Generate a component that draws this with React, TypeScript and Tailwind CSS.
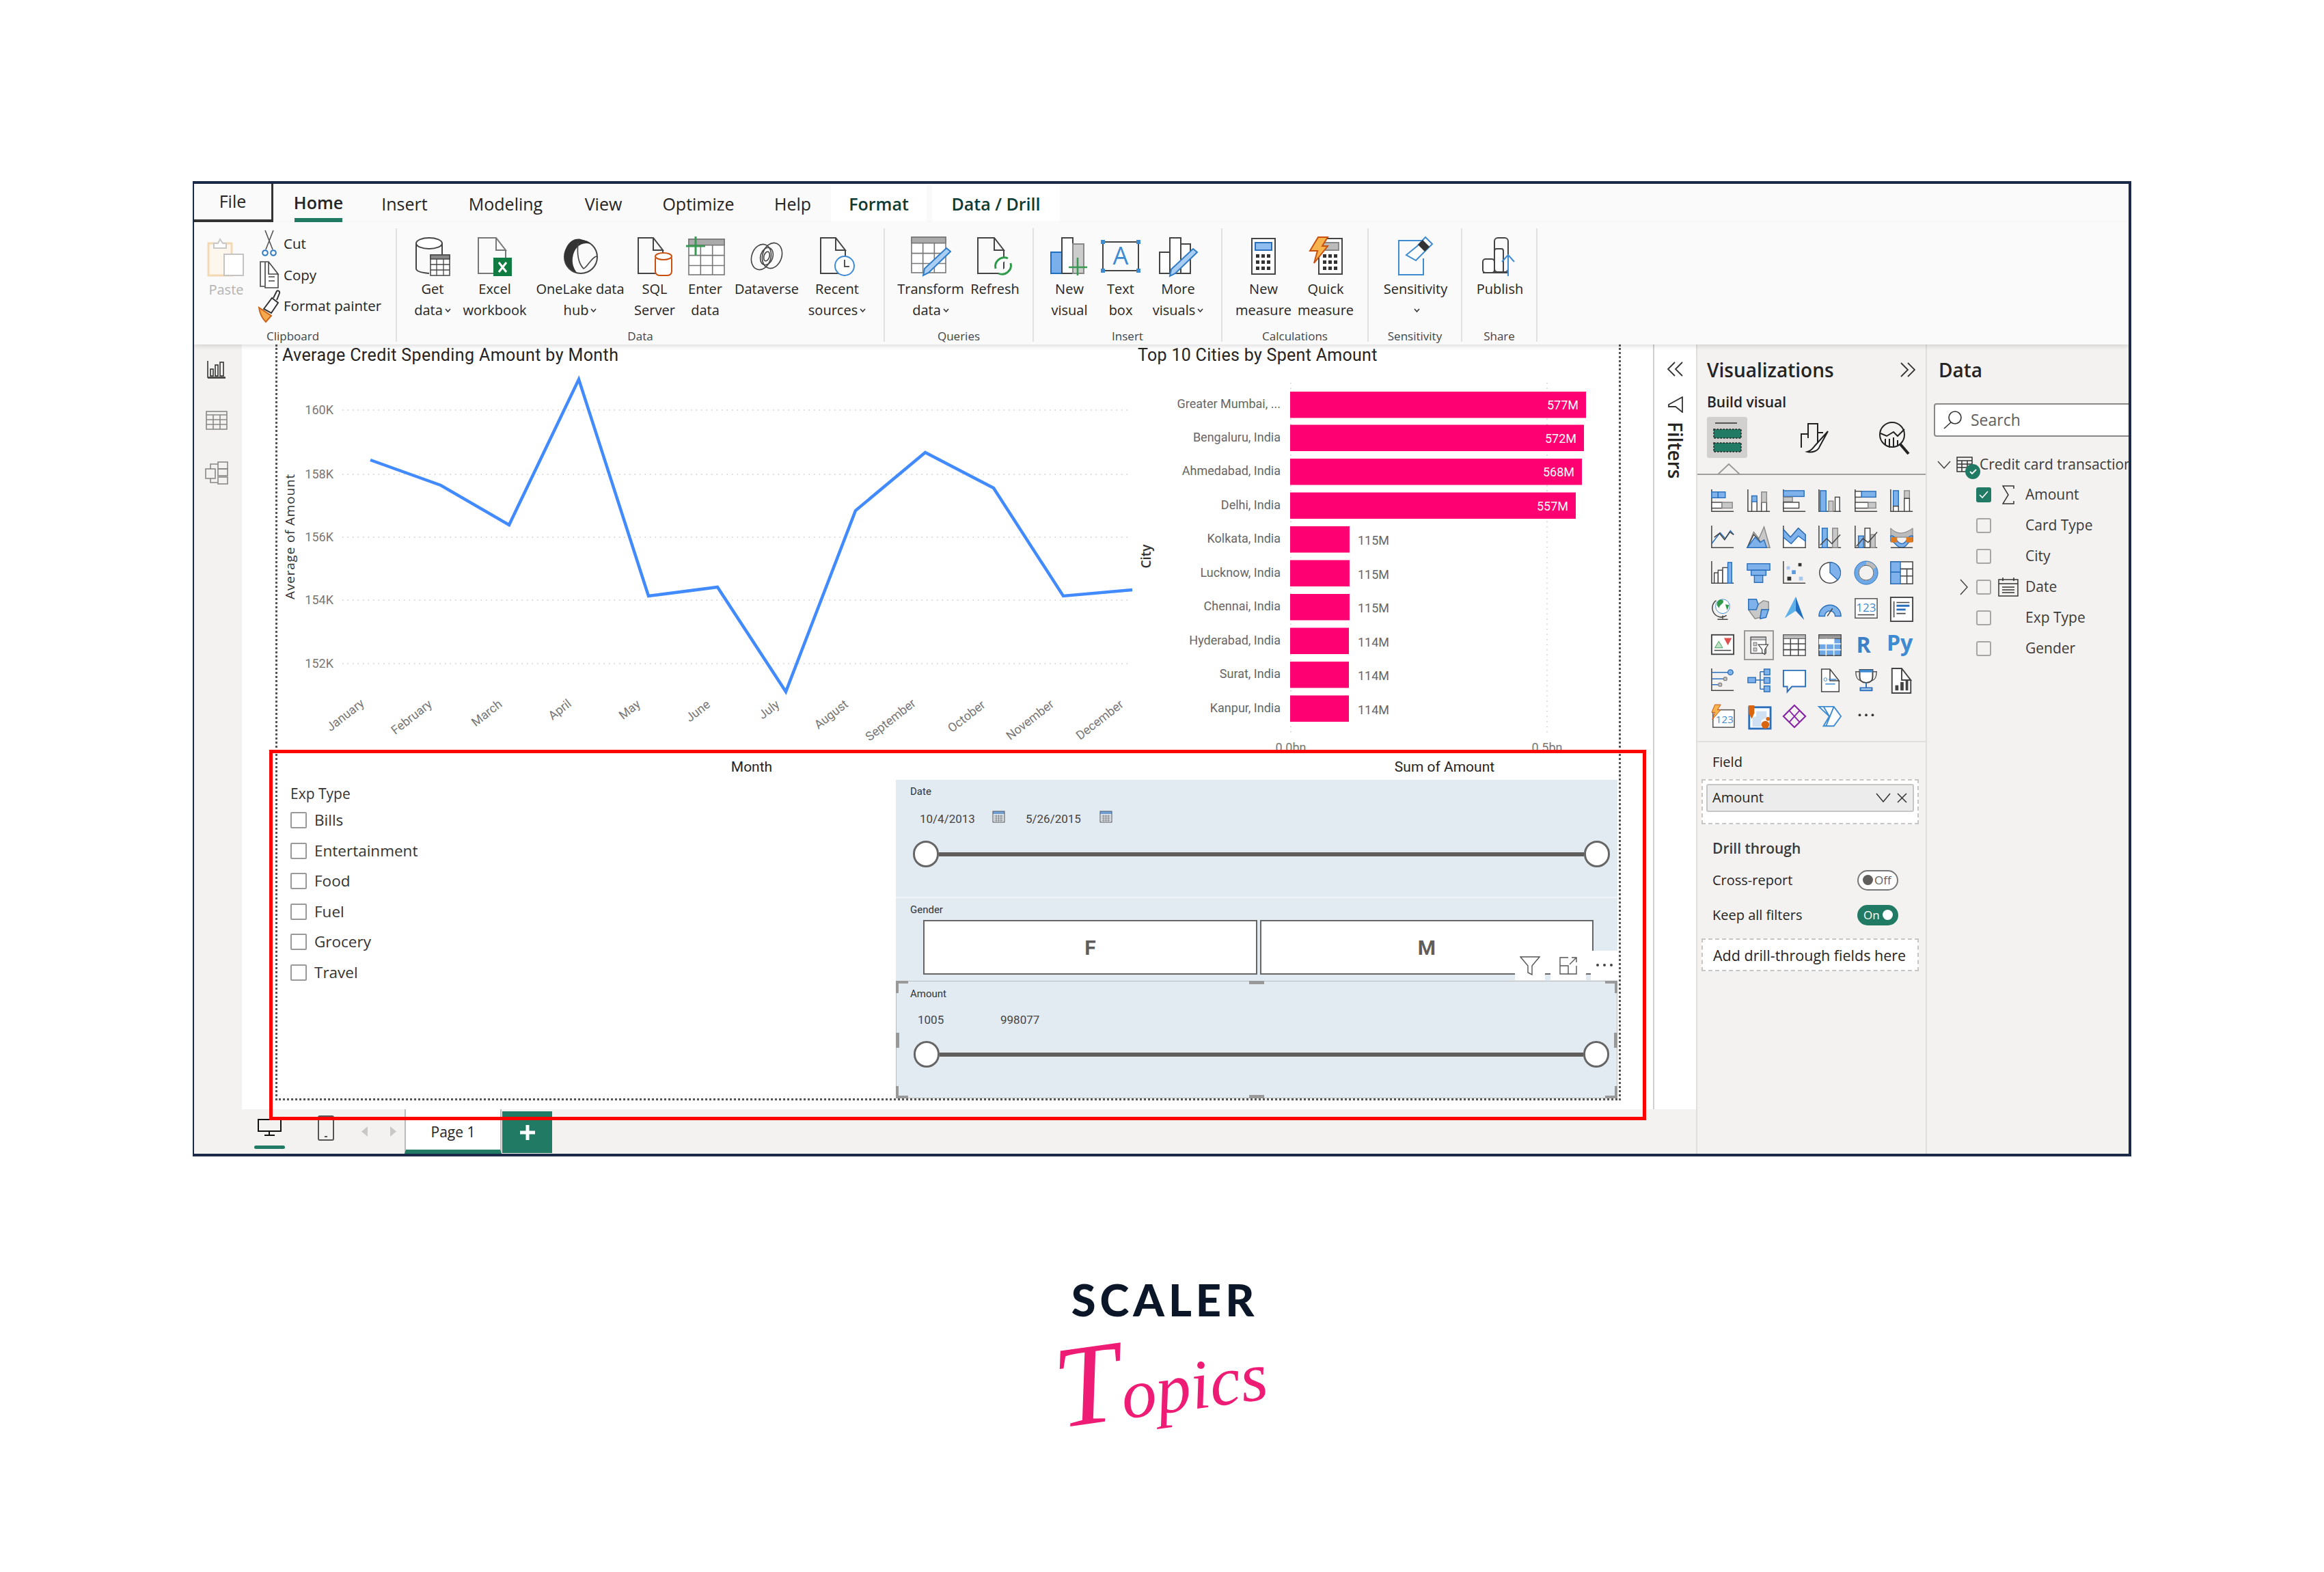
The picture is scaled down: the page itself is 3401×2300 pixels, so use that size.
import React from "react";

const D = "#444";
const Svg = ({ w, h, children }: { w: number; h: number; children: React.ReactNode }) => (
  <svg width={w} height={h} viewBox={`0 0 ${w} ${h}`} fill="none" stroke={D} strokeWidth="2" className="overflow-visible shrink-0">{children}</svg>
);
const docPath = (x: number, y: number, w: number, h: number) => `M${x + w} ${y + 18}V${y + h}H${x}V${y}H${x + w - 14}L${x + w} ${y + 18}H${x + w - 14}V${y}`;
const Calc = ({ x, y, blue }: { x: number; y: number; blue?: boolean }) => (
  <g>
    <rect x={x} y={y} width="34" height="52" fill="#fff" />
    <rect x={x + 5} y={y + 6} width="24" height="11" fill={blue ? "#8fbdf0" : "#bbb"} stroke={blue ? "#2a6fbb" : "#888"} />
    {[23, 32, 41].map((dy) => [6, 14, 22].map((dx) => <rect key={dy * 100 + dx} x={x + dx} y={y + dy} width="5" height="5" fill="#333" stroke="none" />))}
  </g>
);
const TableI = ({ x, y, w, h }: { x: number; y: number; w: number; h: number }) => (
  <g stroke="#777" strokeWidth="1.6">
    <rect x={x} y={y} width={w} height={h} fill="#fff" />
    <rect x={x} y={y} width={w} height={h / 6} fill="#aaa" />
    <path d={`M${x + w / 3} ${y + h / 6}V${y + h}M${x + (2 * w) / 3} ${y + h / 6}V${y + h}M${x} ${y + h / 2.2}H${x + w}M${x} ${y + h / 1.35}H${x + w}`} />
  </g>
);
const Pencil = ({ x, y }: { x: number; y: number }) => (
  <path d={`M${x + 34} ${y}l6 5L${x + 8} ${y + 36}L${x} ${y + 40}L${x + 2} ${y + 30}Z`} fill="#a9cdf3" stroke="#2f7cc7" />
);

const Paste = () => (<Svg w={56} h={58}><rect x="2" y="9" width="34" height="47" stroke="#f3d8b4" strokeWidth="3" fill="#fdf6ec" /><path d="M10 16V9h6l3-6 4 6h5v7z" stroke="#c8c8c8" fill="#fff" /><rect x="25" y="25" width="28" height="31" stroke="#c4c4c4" fill="#fff" /></Svg>);
const Cut = () => (<Svg w={20} h={40}><path d="M4 0l11 28M16 0L5 28" strokeWidth="1.6" stroke="#555" /><circle cx="4" cy="33" r="3.8" stroke="#2b78c5" /><circle cx="16" cy="33" r="3.8" stroke="#2b78c5" /></Svg>);
const Copy = () => (<Svg w={30} h={42}><path d="M8 2H2v36h6" strokeWidth="1.6" /><path d={docPath(9, 2, 19, 38)} strokeWidth="1.6" fill="#fff" /><path d="M14 24h9M14 30h9" strokeWidth="1.4" /></Svg>);
const Painter = () => (<Svg w={32} h={48}><path d="M1 26l18 12-8 9C6 42 2 34 1 26z" fill="#f5a94c" stroke="#c8651b" /><path d="M8 28L20 12l9 7-10 15z" fill="#fff" stroke="#333" /><path d="M22 12l5-10c1-2 5 0 4 3l-4 10" fill="#fff" stroke="#333" /></Svg>);
const GetData = () => (<Svg w={51} h={57}><path d="M1 9v37c0 4 8 6 19 7M39 9v16" /><ellipse cx="20" cy="9" rx="19" ry="8" fill="#fff" /><rect x="22" y="26" width="28" height="30" fill="#fff" strokeWidth="1.5" /><rect x="22" y="26" width="28" height="6" fill="#888" strokeWidth="1.5" /><path d="M31 32v24M41 32v24M22 40h28M22 48h28" strokeWidth="1.3" /></Svg>);
const Excel = () => (<Svg w={51} h={57}><path d={docPath(1, 1, 40, 52)} stroke="#777" /><rect x="23" y="30" width="27" height="27" fill="#107c41" stroke="none" /><path d="M31 37l11 14M42 37L31 51" stroke="#fff" strokeWidth="3" /></Svg>);
const OneLake = () => (<Svg w={51} h={56}><circle cx="26" cy="29" r="24" /><path d="M2 28C2 14 12 0 26 3c10 2 14 7 14 7C26 6 16 16 14 30c-1 8 1 15 6 22C9 48 2 40 2 28z" fill="#333" stroke="none" /><path d="M22 8c-2 18 0 30 8 38 6-2 12-18 20-18" strokeWidth="1.6" /></Svg>);
const Sql = () => (<Svg w={50} h={57}><path d={docPath(1, 1, 36, 52)} /><g stroke="#ca5010"><rect x="26" y="26" width="24" height="30" rx="6" fill="#fff" /><ellipse cx="38" cy="28" rx="12" ry="5" fill="#fff" /></g></Svg>);
const Enter = () => (<Svg w={56} h={58}><TableI x={4} y={4} w={52} h={52} /><path d="M14 0v28M0 14h28" stroke="#3a9a54" strokeWidth="3" /></Svg>);
const Dataverse = () => (<Svg w={51} h={42}><ellipse cx="17" cy="22" rx="14" ry="19" transform="rotate(18 17 22)" strokeWidth="1.6" /><ellipse cx="33" cy="20" rx="14" ry="19" transform="rotate(18 33 20)" strokeWidth="1.6" /><ellipse cx="25" cy="21" rx="9" ry="13" transform="rotate(18 25 21)" strokeWidth="1.6" /><ellipse cx="25" cy="21" rx="4" ry="7" transform="rotate(18 25 21)" strokeWidth="1.6" /></Svg>);
const Recent = () => (<Svg w={51} h={57}><path d={docPath(1, 1, 36, 52)} /><circle cx="36" cy="42" r="14" fill="#fff" stroke="#3f8bd2" /><path d="M36 33v10h7" stroke="#555" /></Svg>);
const Transform = () => (<Svg w={58} h={58}><TableI x={1} y={1} w={50} h={52} /><Pencil x={18} y={17} /></Svg>);
const Refresh = () => (<Svg w={52} h={57}><path d={docPath(1, 1, 38, 52)} /><path d="M27 46a13 13 0 0 1 18-15M49 38a13 13 0 0 1-18 15" stroke="#2e9a4a" strokeWidth="3" fill="#fff" /></Svg>);
const NewVisual = () => (<Svg w={56} h={57}><rect x="1" y="22" width="16" height="31" fill="#79b0ec" stroke="#1f6ec0" /><rect x="17" y="1" width="16" height="52" fill="#fff" /><rect x="33" y="10" width="16" height="43" fill="#ccc" stroke="#888" /><path d="M40 30v26M27 44h27" stroke="#3a9a54" strokeWidth="2.6" /></Svg>);
const TextBox = () => (<Svg w={58} h={48}><rect x="3" y="3" width="52" height="42" /><rect x="0" y="0" width="6" height="6" fill="#3f8bd2" stroke="none" /><rect x="52" y="0" width="6" height="6" fill="#3f8bd2" stroke="none" /><rect x="0" y="42" width="6" height="6" fill="#3f8bd2" stroke="none" /><rect x="52" y="42" width="6" height="6" fill="#3f8bd2" stroke="none" /><text x="29" y="36" textAnchor="middle" fontSize="36" fill="#3f8bd2" stroke="none" fontFamily="Open Sans">A</text></Svg>);
const MoreVis = () => (<Svg w={56} h={57}><rect x="1" y="22" width="15" height="31" fill="#fff" /><rect x="16" y="1" width="16" height="52" fill="#fff" /><rect x="32" y="10" width="14" height="43" fill="#fff" /><Pencil x={16} y={17} /></Svg>);
const NewMeasure = () => (<Svg w={36} h={54}><Calc x={1} y={1} blue /></Svg>);
const Quick = () => (<Svg w={50} h={56}><Calc x={15} y={2} /><path d="M14 0h14l-8 13h8L8 38l5-18H2z" fill="#f7b44e" stroke="#ca5010" /></Svg>);
const Sensitivity = () => (<Svg w={52} h={58}><path d="M36 6H1v50h36V32" stroke="#3f8bd2" /><path d="M28 14L40 1l10 10-24 24-14-8z" fill="#fff" stroke="#3f8bd2" /><path d="M36 5l10 10-7 7-10-10z" fill="#333" stroke="none" /></Svg>);
const Publish = () => (<Svg w={52} h={57}><rect x="1" y="32" width="17" height="20" rx="4" fill="#fff" /><rect x="18" y="17" width="13" height="35" rx="3" fill="#fff" /><rect x="18" y="1" width="20" height="50" rx="5" /><path d="M1 52h36" /><path d="M38 57V27M29 36l9-10 9 10" stroke="#3f8bd2" /></Svg>);

const chev = <span className="inline-block ml-[3px] text-[11px] align-middle">
  <svg width="9" height="6" viewBox="0 0 9 6" fill="none" stroke="#333" strokeWidth="1.6"><path d="M1 1l3.5 4L8 1" /></svg>
</span>;

function Item({ w, icon, a, b, c }: { w: string; icon: React.ReactNode; a: string; b?: string; c?: boolean }) {
  return (
    <div className={`${w} flex flex-col items-center shrink-0`}>
      <div className="h-[60px] flex items-center justify-center">{icon}</div>
      <div className="mt-[2px] text-[20px] leading-[31px] whitespace-nowrap text-[#252423]">{a}</div>
      <div className="text-[20px] leading-[31px] h-[31px] whitespace-nowrap text-[#252423] flex items-center">{b}{c && chev}</div>
    </div>
  );
}
function Group({ w, label, children }: { w: string; label: string; children: React.ReactNode }) {
  return (
    <div className={`${w} h-[166px] mt-[9px] border-r-2 border-[#e4e2e0] flex flex-col shrink-0`}>
      <div className="flex-1 flex pt-[11px]">{children}</div>
      <div className="h-[17px] leading-[17px] text-[17px] text-center text-[#444] whitespace-nowrap">{label}</div>
    </div>
  );
}

const bl = { fill: "#7fb2ea", stroke: "#2a6fbb", strokeWidth: 1.5 };
const gr = { fill: "#c8c8c8", stroke: "#888", strokeWidth: 1.5 };
const wh = { fill: "#fff", stroke: "#444", strokeWidth: 1.5 };
const Ax = () => <path d="M1 0V34H35" stroke="#444" strokeWidth="1.6" fill="none" />;
const VL = ({ d, c = "#444" }: { d: string; c?: string }) => <path d={d} stroke={c} strokeWidth="1.6" fill="none" />;
const blueD = "#2a6fbb";
const viz: React.ReactNode[] = [
  <><Ax /><rect x="1" y="4" width="10" height="9" {...bl} /><rect x="11" y="4" width="11" height="9" {...bl} /><rect x="1" y="20" width="16" height="9" {...wh} /><rect x="17" y="20" width="16" height="9" {...gr} /></>,
  <><Ax /><rect x="7" y="18" width="8" height="16" {...wh} /><rect x="7" y="10" width="8" height="9" {...bl} /><rect x="22" y="20" width="8" height="14" {...wh} /><rect x="22" y="4" width="8" height="16" {...gr} /></>,
  <><Ax /><rect x="1" y="2" width="32" height="9" {...bl} /><rect x="1" y="12" width="14" height="7" {...gr} /><rect x="1" y="20" width="24" height="9" {...wh} /></>,
  <><Ax /><rect x="3" y="2" width="9" height="32" {...bl} /><rect x="16" y="18" width="7" height="16" {...gr} /><rect x="26" y="12" width="7" height="22" {...wh} /></>,
  <><Ax /><rect x="1" y="3" width="10" height="9" {...wh} /><rect x="11" y="3" width="22" height="9" {...bl} /><rect x="1" y="20" width="20" height="9" {...wh} /><rect x="21" y="20" width="12" height="9" {...gr} /></>,
  <><Ax /><rect x="5" y="2" width="8" height="24" {...bl} /><rect x="5" y="26" width="8" height="8" {...wh} /><rect x="22" y="2" width="8" height="12" {...gr} /><rect x="22" y="14" width="8" height="20" {...wh} /></>,
  <><Ax /><VL d="M1 28L14 11l8 9 8-12 5 6" c="#2a6fbb" /><VL d="M5 18l8-6 8 10 8-12 6 4" /></>,
  <><path d="M0 34L10 10l8 10 8-18 9 32z" {...gr} /><path d="M0 34L10 14l8 8 7 12z" {...wh} /><path d="M0 34L12 18l8 8 6-4 4 12z" {...bl} /></>,
  <><Ax /><path d="M1 6L12 18 24 4 35 14V34H1z" {...wh} /><path d="M1 6L12 18 24 4 35 14V24L24 16 13 28 1 18z" {...bl} /></>,
  <><Ax /><rect x="6" y="4" width="8" height="30" {...bl} /><rect x="22" y="4" width="8" height="30" {...gr} /><VL d="M3 30l10-10 8 8 13-14" /></>,
  <><Ax /><rect x="6" y="16" width="8" height="18" {...bl} /><rect x="16" y="4" width="8" height="30" {...wh} /><rect x="25" y="14" width="7" height="20" {...gr} /><VL d="M3 32l10-12 8 6 14-16" /></>,
  <><path d="M1 4c10 10 20 10 34 0v14H1z" fill="#bbb" stroke="#777" /><path d="M1 16c8-2 8 12 17 12S26 14 35 16v8c-8-2-8 10-17 10S8 24 1 24z" {...bl} /><rect x="1" y="18" width="10" height="8" fill="#e07a1f" /><rect x="25" y="18" width="10" height="8" fill="#e07a1f" /><VL d="M1 34H35" /></>,
  <><Ax /><rect x="5" y="18" width="6" height="16" {...wh} /><rect x="11" y="14" width="7" height="20" {...wh} /><rect x="18" y="10" width="8" height="24" {...wh} /><rect x="26" y="2" width="6" height="32" {...bl} /></>,
  <><rect x="0" y="4" width="35" height="10" {...bl} /><rect x="6" y="14" width="23" height="8" {...bl} /><rect x="11" y="22" width="13" height="11" {...bl} /></>,
  <><Ax /><rect x="6" y="8" width="5" height="5" fill="#a8c8ef" /><rect x="14" y="14" width="6" height="6" fill="#5a9be0" /><rect x="24" y="3" width="5" height="5" fill="#333" /><rect x="7" y="24" width="6" height="6" fill="#333" /><rect x="25" y="24" width="6" height="6" fill="#a8c8ef" /></>,
  <><circle cx="18" cy="18" r="16" fill="#fff" stroke="#444" strokeWidth="1.6" /><path d="M18 18V2a16 16 0 0 1 12 27z" {...bl} /></>,
  <><circle cx="18" cy="18" r="15" fill="none" stroke="#6fa8e6" strokeWidth="6" /><path d="M18 3a15 15 0 0 1 13 8" stroke="#bbb" strokeWidth="6" fill="none" /><circle cx="18" cy="18" r="18" fill="none" stroke={blueD} strokeWidth="1" /><circle cx="18" cy="18" r="11.5" fill="none" stroke="#555" strokeWidth="1" /></>,
  <><rect x="1" y="1" width="34" height="34" fill="#fff" stroke="#444" strokeWidth="1.6" /><rect x="1" y="1" width="15" height="16" {...bl} /><rect x="1" y="17" width="15" height="18" {...bl} /><VL d="M16 12H35M26 12V35M16 23H35" /></>,
  <><circle cx="18" cy="15" r="11" fill="#fff" stroke="#3f8bd2" /><path d="M13 5c6-2 8 3 4 6s-6 6-2 9-6-4-6-8 2-6 4-7zM22 12l6 1-3 8z" fill="#2e9a4a" /><VL d="M8 6a14 14 0 0 0 16 23M18 29v5M10 35H26" /></>,
  <><path d="M2 4h12l3 8 8-6 8 2v12H22l-2 12-8 2-6-8-4-6z" {...gr} /><path d="M2 4h12l3 8-3 8H2zM22 20H33l-4 12-9 2z" {...bl} /></>,
  <><path d="M20 0L33 36 20 22z" fill="#1f6ec0" /><path d="M20 0L3 33 20 22z" fill="#5db0e8" /></>,
  <><path d="M1 30a17 17 0 0 1 34 0H26a8 8 0 0 0-16 0z" {...bl} /><VL d="M14 30l8-12" /></>,
  <><rect x="1" y="3" width="34" height="30" fill="#fff" stroke="#555" strokeWidth="1.6" /><text x="18" y="23" textAnchor="middle" fontSize="18" fill="#3f8bd2" fontFamily="Open Sans">123</text><VL d="M5 28H31" /></>,
  <><rect x="1" y="1" width="34" height="37" fill="#fff" stroke="#444" strokeWidth="2" /><VL d="M6 7V32M10 9H30M10 26H24" /><path d="M10 14H30M10 20H24" stroke="#2a6fbb" strokeWidth="3" fill="none" /></>,
  <><rect x="1" y="3" width="34" height="30" fill="#fff" stroke="#444" strokeWidth="2" /><path d="M6 23l6-10 6 10z" fill="#bfe3c4" stroke="#3a9a54" /><path d="M20 8h12l-6 11z" fill="#e04e4e" /><VL d="M5 27H31" /></>,
  <><rect x="3" y="4" width="28" height="30" fill="#fff" stroke="#444" strokeWidth="1.6" /><rect x="3" y="4" width="28" height="5" fill="#ccc" stroke="#444" /><rect x="8" y="14" width="6" height="6" {...gr} /><rect x="8" y="24" width="6" height="6" {...gr} /><path d="M17 18H35L29 27V36L24 33V27z" {...wh} /></>,
  <><rect x="1" y="3" width="34" height="32" fill="#fff" stroke="#555" strokeWidth="1.6" /><rect x="1" y="3" width="34" height="6" fill="#bbb" stroke="#555" /><VL d="M12 9V35M24 9V35M1 17H35M1 26H35" /></>,
  <><rect x="1" y="3" width="34" height="32" fill="#6fa8e6" stroke="#444" strokeWidth="1.6" /><rect x="1" y="3" width="34" height="6" fill="#999" stroke="#444" /><rect x="1" y="9" width="11" height="8" fill="#fff" /><rect x="12" y="9" width="12" height="8" fill="#fff" /><path d="M12 9V35M24 9V35M1 17H35M1 26H35" stroke="#fff" strokeWidth="1.6" /></>,
  <><text x="14" y="31" textAnchor="middle" fontSize="34" fontWeight="700" fill="#3f7fc6" fontFamily="Open Sans">R</text></>,
  <><text x="15" y="27" textAnchor="middle" fontSize="34" fontWeight="700" fill="#3f8bd2" fontFamily="Open Sans">Py</text></>,
  <><Ax /><VL d="M1 6H26M1 16H20M1 25H12" c="#2a6fbb" /><circle cx="30" cy="6" r="4" {...bl} /><circle cx="22" cy="16" r="2.6" {...gr} /><circle cx="14" cy="25" r="2.6" {...gr} /></>,
  <><rect x="1" y="14" width="12" height="8" {...bl} /><rect x="26" y="1" width="9" height="9" {...bl} /><rect x="26" y="14" width="9" height="9" {...bl} /><rect x="26" y="27" width="9" height="9" {...bl} /><VL d="M13 18H20M20 5V32M20 5H26M20 18H26M20 32H26" c="#2a6fbb" /></>,
  <><path d="M1 3H35V28H14L7 36V28H1z" fill="#fff" stroke="#2a6fbb" strokeWidth="2" /></>,
  <><path d={docPath(5, 1, 27, 35)} stroke="#444" strokeWidth="1.6" fill="#fff" /><circle cx="11" cy="17" r="2.5" stroke="#3f8bd2" fill="none" /><VL d="M16 17H28M11 24H26" c="#3f8bd2" /></>,
  <><path d="M8 5H2c0 10 3 13 8 14M28 5h6c0 10-3 13-8 14" stroke="#555" strokeWidth="1.6" fill="none" /><path d="M8 2H28V13c0 6-4 9-10 9S8 19 8 13z" fill="#fff" stroke="#444" strokeWidth="2" /><path d="M8 2H28V6H8z" fill="#3f8bd2" /><path d="M18 22V30M9 34H27V30H9z" stroke="#2a6fbb" strokeWidth="2" fill="#bcd8f5" /></>,
  <><path d={docPath(3, 0, 29, 38)} fill="#fff" strokeWidth="2" stroke="#444" /><rect x="8" y="26" width="5" height="8" fill="#444" /><rect x="16" y="21" width="5" height="13" fill="#444" /><rect x="24" y="18" width="4" height="16" fill="#444" /></>,
  <><rect x="3" y="8" width="33" height="27" fill="#fff" stroke="#555" strokeWidth="1.6" /><text x="21" y="28" textAnchor="middle" fontSize="16" fill="#3f8bd2" fontFamily="Open Sans">123</text><path d="M6 0H15L10 8h5L2 23l4-11H1z" fill="#f7b44e" stroke="#ca5010" /></>,
  <><rect x="3" y="4" width="33" height="33" fill="#fff" stroke="#2a6fbb" strokeWidth="3" /><path d="M14 10H30V20l-8 4v10H8V20l6-2z" fill="#cfe0f3" /><path d="M2 1h9v12l-4 9-5-9z" fill="#d9650f" /><circle cx="32" cy="22" r="3" fill="#d9650f" /><circle cx="28" cy="31" r="6" fill="#d9650f" /></>,
  <><path d="M18 1L35 18 18 35 1 18z" fill="none" stroke="#8a2aa8" strokeWidth="2" /><path d="M18 1l-8 8 16 18-8 8M18 1l8 8-16 18 8 8M10 9l-9 9 9 9M26 9l9 9-9 9" fill="none" stroke="#8a2aa8" strokeWidth="2" /></>,
  <><path d="M1 3H24L35 18 24 33H8l9-15zM8 3l9 15M24 3L12 33" fill="#fff" stroke="#3f8bd2" strokeWidth="2" /></>,
  <><g fill="#333"><circle cx="8" cy="16" r="2" /><circle cx="18" cy="16" r="2" /><circle cx="28" cy="16" r="2" /></g></>,
];

const cities: [string, number, string, number][] = [
  ["Greater Mumbai, ...", 2321, "577M", 573],
  ["Bengaluru, India", 2318, "572M", 621.5],
  ["Ahmedabad, India", 2315, "568M", 671],
  ["Delhi, India", 2306, "557M", 720.5],
  ["Kolkata, India", 1975, "115M", 770],
  ["Lucknow, India", 1975, "115M", 819.5],
  ["Chennai, India", 1975, "115M", 869],
  ["Hyderabad, India", 1974, "114M", 918.5],
  ["Surat, India", 1974, "114M", 968],
  ["Kanpur, India", 1974, "114M", 1017.5],
];
const months: [string, number, number][] = [
  ["January", 506, 1048], ["February", 603, 1051], ["March", 713, 1045], ["April", 820, 1040], ["May", 922, 1040], ["June", 1022, 1042],
  ["July", 1126, 1040], ["August", 1217, 1047], ["September", 1304, 1055], ["October", 1415, 1050], ["November", 1508, 1055], ["December", 1610, 1055],
];

function LineChart() {
  return (
    <svg width="1254" height="633" viewBox="406 504 1254 633" className="shrink-0 font-['Roboto',sans-serif]">
      <text x="413" y="528" fontSize="25" letterSpacing="0.4" fill="#252423">Average Credit Spending Amount by Month</text>
      {[["160K", 600], ["158K", 694], ["156K", 786], ["154K", 878], ["152K", 971]].map(([t, y]) => (
        <g key={t as string}>
          <text x="488" y={(y as number) + 6} textAnchor="end" fontSize="18" fill="#777">{t}</text>
          <line x1="501" x2="1654" y1={y} y2={y} stroke="#ccc" strokeWidth="1.5" strokeDasharray="1.5 6" />
        </g>
      ))}
      <text transform="translate(431 785) rotate(-90)" textAnchor="middle" fontSize="19" fill="#333" fontFamily="Open Sans" letterSpacing="0.8">Average of Amount</text>
      <polyline points="542,673 645,710 745,768 847,555 949,872 1050,859 1150,1012 1252,747 1354,662 1454,714 1556,872 1657,863" fill="none" stroke="#418aff" strokeWidth="4.5" />
      {months.map(([m, x, y]) => (
        <text key={m} transform={`translate(${x + 3} ${y + 3}) rotate(-38)`} textAnchor="middle" fontSize="18" fill="#777">{m}</text>
      ))}
      <text x="1100" y="1129" textAnchor="middle" fontSize="21" fill="#252423">Month</text>
    </svg>
  );
}
function BarChart() {
  return (
    <svg width="707" height="633" viewBox="1660 504 707 633" className="shrink-0 font-['Roboto',sans-serif]">
      <text x="1665" y="528" fontSize="25" letterSpacing="0.3" fill="#252423">Top 10 Cities by Spent Amount</text>
      <line x1="1889" x2="1889" y1="560" y2="1075" stroke="#ccc" strokeWidth="1.5" strokeDasharray="1.5 6" />
      <line x1="2264" x2="2264" y1="560" y2="1075" stroke="#ccc" strokeWidth="1.5" strokeDasharray="1.5 6" />
      <text transform="translate(1684 814) rotate(-90)" textAnchor="middle" fontSize="19" fontWeight="600" fill="#333" fontFamily="Open Sans">City</text>
      {cities.map(([c, e, v, y]) => (
        <g key={c}>
          <rect x="1888" y={y} width={e - 1888} height="38.5" fill="#ff0073" />
          <text x="1874" y={y + 24} textAnchor="end" fontSize="18" fill="#666">{c}</text>
          {e > 2000 ? <text x={e - 11} y={y + 26} textAnchor="end" fontSize="18" fill="#fff">{v}</text> : <text x="1987" y={y + 27} fontSize="18" fill="#666">{v}</text>}
        </g>
      ))}
      <text x="1889" y="1100" textAnchor="middle" fontSize="18" fill="#777">0.0bn</text>
      <text x="2264" y="1100" textAnchor="middle" fontSize="18" fill="#777">0.5bn</text>
      <text x="2114" y="1129" textAnchor="middle" fontSize="21" fill="#252423">Sum of Amount</text>
    </svg>
  );
}

const Slider = () => (
  <div className="flex items-center pl-[25px] pr-[11px] h-[39px]">
    <div className="w-[38px] h-[39px] rounded-full border-[3px] border-[#666] bg-white shrink-0" />
    <div className="flex-1 h-[6px] bg-[#605e5c]" />
    <div className="w-[38px] h-[39px] rounded-full border-[3px] border-[#666] bg-white shrink-0" />
  </div>
);
const CalIcon = () => (
  <svg width="19" height="19" viewBox="0 0 19 19" fill="none" className="shrink-0 -mt-[10px]">
    <rect x="1" y="2" width="17" height="16" fill="#dfe6ee" stroke="#555" />
    <rect x="1" y="2" width="17" height="4" fill="#2a6fbb" opacity=".6" />
    <path d="M3 9h13M3 12h13M3 15h13M6 7v10M9.500 7v10M13 7v10" stroke="#777" strokeWidth=".8" />
  </svg>
);

const Check = ({ on }: { on?: boolean }) => on ? (
  <div className="w-[22px] h-[22px] rounded-[3px] bg-[#217a64] flex items-center justify-center shrink-0">
    <svg width="14" height="12" viewBox="0 0 14 12" fill="none" stroke="#fff" strokeWidth="1.6"><path d="M1 6l4 4 8-9" /></svg>
  </div>
) : <div className="w-[22px] h-[22px] rounded-[3px] border-2 border-[#a8a6a4] shrink-0" />;

const Corner = ({ cls }: { cls: string }) => <div className={`absolute w-[18px] h-[18px] border-[#999] ${cls}`} />;

export default function App() {
  const tabs: [string, string][] = [["Insert", "w-[120px]"], ["Modeling", "w-[176px]"], ["View", "w-[110px]"], ["Optimize", "w-[168px]"], ["Help", "w-[108px]"]];
  return (
    <div className="w-[3401px] h-[2300px] bg-white relative flex flex-col items-center pt-[265px] font-['Open_Sans',sans-serif] text-[#252423] overflow-hidden">
      <div className="self-start ml-[282px] w-[2837px] h-[1427px] border-4 border-l-2 border-[#1b2a49] flex flex-col overflow-hidden bg-[#f3f2f1] shrink-0">
        {/* Tab strip */}
        <div className="h-[56px] bg-[#fafafa] flex items-stretch text-[25px] shrink-0">
          <div className="w-[116px] border-r-[3px] border-b-[4px] border-[#333] flex items-center justify-center">File</div>
          <div className="w-[132px] flex flex-col items-center relative pt-[11px]">
            <span className="font-semibold leading-[33px]">Home</span>
            <div className="absolute bottom-0 w-[70px] h-[6px] bg-[#217a64]" />
          </div>
          {tabs.map(([t, w]) => <div key={t} className={`${w} flex items-center justify-center pt-[3px]`}>{t}</div>)}
          <div className="ml-[2px] w-[140px] bg-white flex items-center justify-center pt-[3px] font-semibold text-[#0d3b36]">Format</div>
          <div className="ml-[8px] w-[187px] bg-white flex items-center justify-center pt-[3px] font-semibold text-[#0d3b36]">Data / Drill</div>
        </div>
        {/* Ribbon */}
        <div className="h-[179px] bg-[#fafafa] flex items-start shrink-0 shadow-[0_3px_6px_rgba(0,0,0,0.12)] relative z-10">
          <div className="w-[297px] h-[166px] mt-[9px] border-r-2 border-[#e4e2e0] flex flex-col shrink-0">
            <div className="flex-1 flex">
              <div className="w-[94px] flex flex-col items-center pt-[13px]">
                <Paste />
                <div className="mt-[3px] text-[20px] leading-[31px] text-[#b4b2b0]">Paste</div>
              </div>
              <div className="flex flex-col pt-[1px] -mt-[1px]">
                {([[<Cut />, "Cut"], [<Copy />, "Copy"], [<Painter />, "Format painter"]] as [React.ReactNode, string][]).map(([ic, t]) => (
                  <div key={t} className="h-[45.5px] flex items-center">
                    <div className="w-[37px] flex justify-center pr-[6px]">{ic}</div>
                    <span className="text-[20.5px] whitespace-nowrap">{t}</span>
                  </div>
                ))}
              </div>
            </div>
            <div className="h-[17px] leading-[17px] text-[17px] text-center text-[#444] pr-[6px]">Clipboard</div>
          </div>
          <Group w="w-[714px]" label="Data">
            <div className="w-[7px] shrink-0" />
            <Item w="w-[90px]" icon={<GetData />} a="Get" b="data" c />
            <Item w="w-[92px]" icon={<Excel />} a="Excel" b="workbook" />
            <Item w="w-[158px]" icon={<OneLake />} a="OneLake data" b="hub" c />
            <Item w="w-[60px]" icon={<Sql />} a="SQL" b="Server" />
            <Item w="w-[88px]" icon={<Enter />} a="Enter" b="data" />
            <Item w="w-[92px]" icon={<Dataverse />} a="Dataverse" />
            <Item w="w-[114px]" icon={<Recent />} a="Recent" b="sources" c />
          </Group>
          <Group w="w-[218px]" label="Queries">
            <Item w="w-[134px]" icon={<Transform />} a="Transform" b="data" c />
            <Item w="w-[54px]" icon={<Refresh />} a="Refresh" />
          </Group>
          <Group w="w-[276px]" label="Insert">
            <Item w="w-[104px]" icon={<NewVisual />} a="New" b="visual" />
            <Item w="w-[46px]" icon={<TextBox />} a="Text" b="box" />
            <Item w="w-[122px]" icon={<MoreVis />} a="More" b="visuals" c />
          </Group>
          <Group w="w-[214px]" label="Calculations">
            <Item w="w-[120px]" icon={<NewMeasure />} a="New" b="measure" />
            <Item w="w-[62px]" icon={<Quick />} a="Quick" b="measure" />
          </Group>
          <Group w="w-[137px]" label="Sensitivity">
            <Item w="w-[137px]" icon={<Sensitivity />} a="Sensitivity" c />
          </Group>
          <Group w="w-[110px]" label="Share">
            <Item w="w-[110px]" icon={<Publish />} a="Publish" />
          </Group>
        </div>
        {/* Body */}
        <div className="flex-1 flex min-h-0">
          {/* Left nav */}
          <div className="w-[70px] shrink-0 flex flex-col items-center pt-[24px] pr-[4px]">
            <svg width="28" height="26" viewBox="0 0 28 26" fill="none" stroke="#333" strokeWidth="1.6"><path d="M1 0V24H27" /><path d="M1 25H27" /><rect x="5" y="12" width="4" height="10" /><rect x="12" y="6" width="4" height="16" /><rect x="19" y="2" width="5" height="20" /></svg>
            <svg className="mt-[47px]" width="32" height="28" viewBox="0 0 32 28" fill="none" stroke="#888" strokeWidth="1.6"><rect x="1" y="1" width="30" height="26" /><path d="M1 6H31M11 6V27M21 6V27M1 13H31M1 20H31" /></svg>
            <svg className="mt-[46px]" width="34" height="34" viewBox="0 0 34 34" fill="none" stroke="#888" strokeWidth="1.6"><rect x="1" y="11" width="14" height="14" /><rect x="19" y="1" width="14" height="10" /><rect x="19" y="11" width="14" height="10" /><rect x="19" y="23" width="14" height="10" /><path d="M8 25v6h11M8 11V4h11" /></svg>
          </div>
          {/* Middle */}
          <div className="w-[2128px] shrink-0 flex flex-col">
            <div className="h-[1119px] flex shrink-0">
              <div className="w-[2067px] bg-white pl-[49px] border-r-2 border-[#d0d0d0] shrink-0">
                <div className="w-[1969px] h-[1106px] border-l-[3px] border-r-[3px] border-b-[3px] border-dotted border-[#555] flex flex-col">
                  <div className="flex h-[633px] shrink-0">
                    <LineChart />
                    <BarChart />
                  </div>
                  <div className="flex-1 flex">
                    {/* Exp type slicer */}
                    <div className="w-[905px] shrink-0 pl-[19px] pt-[11px]">
                      <div className="text-[21px] leading-[26px] font-medium text-[#333]">Exp Type</div>
                      <div className="mt-[4px] flex flex-col">
                        {["Bills", "Entertainment", "Food", "Fuel", "Grocery", "Travel"].map((t) => (
                          <div key={t} className="h-[44.5px] flex items-center gap-[11px]">
                            <div className="w-[24px] h-[24px] border-2 border-[#999] rounded-[2px] shrink-0" />
                            <span className="text-[22.5px] text-[#333]">{t}</span>
                          </div>
                        ))}
                      </div>
                    </div>
                    {/* Right slicers */}
                    <div className="flex-1 pt-[4px] pr-[2px] font-['Roboto',sans-serif]">
                      <div className="bg-[#e3ebf2] h-[171px] pt-[8px] pl-0">
                        <div className="pl-[21px] text-[15px] leading-[18px] text-[#333]">Date</div>
                        <div className="mt-[18px] pl-[35px] h-[28px] flex items-center text-[17px] text-[#444]">
                          <span className="w-[106px]">10/4/2013</span>
                          <CalIcon />
                          <span className="w-[108px] ml-[30px]">5/26/2015</span>
                          <CalIcon />
                        </div>
                        <div className="mt-[17px]"><Slider /></div>
                      </div>
                      <div className="bg-[#e3ebf2] h-[123px] border-t-2 border-[#f0f4f8] pt-[8px] relative">
                        <div className="pl-[21px] text-[15px] leading-[18px] text-[#333]">Gender</div>
                        <div className="mt-[6px] pl-[40px] flex gap-[4px]">
                          <div className="w-[489px] h-[80px] bg-white border-2 border-[#666] flex items-center justify-center text-[30px] font-bold text-[#605e5c]">F</div>
                          <div className="w-[488px] h-[80px] bg-white border-2 border-[#666] flex items-center justify-center text-[30px] font-bold text-[#605e5c]">M</div>
                        </div>
                        <div className="absolute right-0 top-[77px] w-[150px] h-[43px] flex z-10">
                          <div className="w-[44px] bg-white flex items-center justify-center">
                            <svg width="30" height="28" viewBox="0 0 30 28" fill="none" stroke="#555" strokeWidth="1.4"><path d="M1 1H29L18 14V27L12 24V14z" /></svg>
                          </div>
                          <div className="w-[8px]" />
                          <div className="w-[52px] bg-white flex items-center justify-center">
                            <svg width="26" height="26" viewBox="0 0 26 26" fill="none" stroke="#555" strokeWidth="1.4"><path d="M13 1H1V25H25V13M1 13H13V25M15 11L25 1M18 1H25V8" /></svg>
                          </div>
                          <div className="w-[7px]" />
                          <div className="flex-1 bg-white flex items-center justify-center gap-[6px] pb-[2px]">
                            <i className="w-[4px] h-[4px] rounded-full bg-[#444]" /><i className="w-[4px] h-[4px] rounded-full bg-[#444]" /><i className="w-[4px] h-[4px] rounded-full bg-[#444]" />
                          </div>
                        </div>
                      </div>
                      <div className="bg-[#e3ebf2] h-[172px] border border-[#bdbdbd] pt-[9px] relative">
                        <Corner cls="left-[-1px] top-[-1px] border-l-[4px] border-t-[4px]" />
                        <Corner cls="right-[-1px] top-[-1px] border-r-[4px] border-t-[4px]" />
                        <Corner cls="left-[-1px] bottom-[-1px] border-l-[4px] border-b-[4px]" />
                        <Corner cls="right-[-1px] bottom-[-1px] border-r-[4px] border-b-[4px]" />
                        <div className="absolute left-1/2 top-[-1px] -ml-[11px] w-[22px] h-[5px] bg-[#999]" />
                        <div className="absolute left-1/2 bottom-[-1px] -ml-[11px] w-[22px] h-[5px] bg-[#999]" />
                        <div className="absolute left-[-1px] top-[75px] w-[5px] h-[22px] bg-[#999]" />
                        <div className="absolute right-[-1px] top-[75px] w-[5px] h-[22px] bg-[#999]" />
                        <div className="pl-[20px] text-[15px] leading-[18px] text-[#333]">Amount</div>
                        <div className="mt-[17px] pl-[31px] h-[26px] flex items-center text-[17px] text-[#444]">
                          <span className="w-[121px]">1005</span>
                          <span>998077</span>
                        </div>
                        <div className="mt-[17px]"><Slider /></div>
                      </div>
                    </div>
                  </div>
                </div>
              </div>
              {/* Filters */}
              <div className="w-[61px] bg-white shrink-0 flex flex-col items-center pt-[25px]">
                <svg width="23" height="22" viewBox="0 0 23 22" fill="none" stroke="#333" strokeWidth="1.8"><path d="M11 1L1 11l10 10M22 1L12 11l10 10" /></svg>
                <svg className="mt-[29px]" width="22" height="24" viewBox="0 0 22 24" fill="none" stroke="#333" strokeWidth="1.8"><path d="M21 1V23L11 15H1L1 12 21 1z" /></svg>
                <div className="mt-[13px] [writing-mode:vertical-rl] text-[28px] font-semibold leading-[30px]">Filters</div>
              </div>
            </div>
            {/* Bottom bar */}
            <div className="flex-1 flex pl-[18px]">
              <div className="w-[45px] flex flex-col items-center pt-[14px] shrink-0">
                <svg width="35" height="25" viewBox="0 0 35 25" fill="none" stroke="#111" strokeWidth="2"><rect x="1" y="1" width="33" height="17" /><path d="M17 18v6M10 24h15" /></svg>
                <div className="mt-[14px] w-[45px] h-[5px] rounded-full bg-[#217a64]" />
              </div>
              <div className="ml-[48px] pt-[9px] shrink-0">
                <svg width="24" height="37" viewBox="0 0 24 37" fill="none" stroke="#555" strokeWidth="2"><rect x="1" y="1" width="22" height="35" rx="2" /><path d="M10 31h4" /></svg>
              </div>
              <div className="ml-[40px] pt-[25px] shrink-0"><svg width="9" height="15" viewBox="0 0 9 15"><path d="M9 0V15L0 7.500z" fill="#c8c8c8" /></svg></div>
              <div className="ml-[33px] pt-[25px] shrink-0"><svg width="9" height="15" viewBox="0 0 9 15"><path d="M0 0V15L9 7.500z" fill="#c8c8c8" /></svg></div>
              <div className="ml-[12px] w-[142px] bg-white border-x-2 border-[#bbb] border-b-[6px] border-b-[#217a64] flex items-center justify-center pt-[8px] text-[21px] shrink-0">Page 1</div>
              <div className="ml-[1px] mt-[3px] mb-[1px] w-[73px] bg-[#217a64] flex items-center justify-center shrink-0">
                <svg width="22" height="22" viewBox="0 0 22 22" fill="none" stroke="#fff" strokeWidth="5"><path d="M11 0v22M0 11h22" /></svg>
              </div>
            </div>
          </div>
          {/* Visualizations */}
          <div className="w-[338px] shrink-0 border-l-2 border-[#e1dfdd] border-r-2 flex flex-col">
            <div className="h-[74px] pl-[14px] pr-[15px] flex items-center justify-between">
              <span className="text-[28px] font-semibold leading-none">Visualizations</span>
              <svg width="22" height="22" viewBox="0 0 22 22" fill="none" stroke="#333" strokeWidth="1.8"><path d="M1 1l10 10L1 21M11 1l10 10-10 10" /></svg>
            </div>
            <div className="h-[20px] pl-[14px] flex items-center text-[21px] font-semibold leading-none">Build visual</div>
            <div className="mt-[12px] h-[60px] flex items-center pl-[14px]">
              <div className="w-[59px] h-[60px] bg-[#d2d0ce] rounded-[3px] flex items-center justify-center">
                <svg width="44" height="46" viewBox="0 0 44 46"><path d="M4 2H36" stroke="#555" strokeWidth="2" /><rect x="2" y="11" width="40" height="13" fill="#217a64" stroke="#222" strokeWidth="1.500" strokeDasharray="2.500 2" /><rect x="2" y="31" width="40" height="13" fill="#217a64" stroke="#222" strokeWidth="1.500" strokeDasharray="2.500 2" /></svg>
              </div>
              <div className="ml-[78px] mt-[2px]">
                <svg width="42" height="44" viewBox="0 0 42 44" fill="none" stroke="#222" strokeWidth="2"><path d="M1 36V16h10M11 22V1h14v20M25 28V14h8" /><path d="M40 12L22 32c-3 3-5 8-12 10 8 2 16-2 18-8z" fill="#fff" /></svg>
              </div>
              <div className="ml-[72px] mt-[2px]">
                <svg width="46" height="54" viewBox="0 0 46 54" fill="none" stroke="#222" strokeWidth="2"><circle cx="20" cy="22" r="18" /><path d="M3 20l9 4 10-6 6 6 10-10M10 28v10M16 28v13M22 26v15M28 30v9" /><path d="M32 36l12 14" strokeWidth="4" /></svg>
              </div>
            </div>
            <div className="h-[24px] relative shrink-0">
              <svg className="absolute left-[30px] top-[8px]" width="32" height="17" viewBox="0 0 32 17" fill="none" stroke="#999" strokeWidth="2"><path d="M0 16L16 1l16 15" /></svg>
            </div>
            <div className="h-[2px] bg-[#a19f9d] shrink-0 -mt-[1px]" />
            <div className="mt-[13px] pl-[11px] grid grid-cols-[repeat(6,52.4px)] auto-rows-[52.4px]">
              {viz.map((v, i) => (
                <div key={i} className="flex items-center justify-center">
                  <div className={i === 25 ? "w-[44px] h-[44px] border-2 border-[#999] bg-[#eeedec] flex items-center justify-center" : "flex"}>
                    <svg width={i === 25 ? 30 : 36} height={i === 25 ? 30 : 36} viewBox="0 0 36 38" className="overflow-visible">{v}</svg>
                  </div>
                </div>
              ))}
            </div>
            <div className="mt-[9px] h-[2px] bg-[#e1dfdd] shrink-0" />
            <div className="pl-[22px] mt-[15px] text-[20px] leading-[28px]">Field</div>
            <div className="ml-[6px] mt-[11px] w-[318px] h-[66px] bg-white border-2 border-dashed border-[#c8c6c4] p-[5px]">
              <div className="h-[41px] bg-[#ececec] border-2 border-[#c8c6c4] rounded-[3px] flex items-center pl-[7px] pr-[8px] text-[20px]">
                <span className="flex-1">Amount</span>
                <svg width="22" height="14" viewBox="0 0 22 14" fill="none" stroke="#333" strokeWidth="1.5"><path d="M1 1l10 12L21 1" /></svg>
                <svg className="ml-[9px]" width="15" height="15" viewBox="0 0 15 15" fill="none" stroke="#333" strokeWidth="1.5"><path d="M1 1l13 13M14 1L1 14" /></svg>
              </div>
            </div>
            <div className="pl-[22px] mt-[21px] text-[21px] font-semibold leading-[28px] text-[#3b3a39]">Drill through</div>
            <div className="mt-[18px] h-[30px] pl-[22px] pr-[40px] flex items-center justify-between text-[20px]">
              <span>Cross-report</span>
              <div className="w-[60px] h-[30px] rounded-full border-2 border-[#777] bg-white flex items-center pl-[6px] gap-[2px] text-[17px] text-[#605e5c] leading-none">
                <i className="w-[15px] h-[15px] rounded-full bg-[#605e5c] shrink-0" />Off
              </div>
            </div>
            <div className="mt-[21px] h-[30px] pl-[22px] pr-[40px] flex items-center justify-between text-[20px]">
              <span>Keep all filters</span>
              <div className="w-[60px] h-[30px] rounded-full bg-[#217a64] flex items-center pl-[9px] gap-[4px] text-[17px] text-white leading-none">
                On<i className="w-[15px] h-[15px] rounded-full bg-white shrink-0" />
              </div>
            </div>
            <div className="ml-[6px] mt-[19px] w-[318px] h-[48px] bg-white border-2 border-dashed border-[#c8c6c4] flex items-center pl-[15px] pt-[2px] text-[21.5px] whitespace-nowrap">Add drill-through fields here</div>
          </div>
          {/* Data */}
          <div className="flex-1 min-w-0 flex flex-col overflow-hidden">
            <div className="h-[74px] pl-[17px] flex items-center text-[28px] font-semibold leading-none">Data</div>
            <div className="mt-[12px] ml-[10px] w-[300px] h-[49px] bg-white border-2 border-[#8a8886] rounded-l-[4px] flex items-center pl-[12px] shrink-0">
              <svg width="27" height="27" viewBox="0 0 27 27" fill="none" stroke="#333" strokeWidth="1.6"><circle cx="17" cy="10" r="9" /><path d="M11 17L1 26" /></svg>
              <span className="ml-[13px] text-[23px] text-[#605e5c]">Search</span>
            </div>
            <div className="mt-[21px] h-[40px] flex items-center pl-[15px] whitespace-nowrap text-[21px]">
              <svg width="20" height="12" viewBox="0 0 20 12" fill="none" stroke="#444" strokeWidth="1.5" className="shrink-0"><path d="M1 1l9 10L19 1" /></svg>
              <div className="ml-[8px] w-[34px] relative h-[24px] shrink-0">
                <svg width="24" height="23" viewBox="0 0 24 23" fill="none" stroke="#333" strokeWidth="1.5"><rect x="1" y="1" width="22" height="21" /><path d="M1 6H23M8 6V22M16 6V22M1 11H23M1 16H23" /></svg>
                <div className="absolute left-[13px] top-[11px] w-[22px] h-[22px] rounded-full bg-[#217a64] flex items-center justify-center">
                  <svg width="11" height="9" viewBox="0 0 11 9" fill="none" stroke="#fff" strokeWidth="1.8"><path d="M1 4l3 3 6-6" /></svg>
                </div>
              </div>
              <span className="text-[#3b3a39]">Credit card transaction</span>
            </div>
            <div className="mt-[1px] flex flex-col text-[21px] text-[#3b3a39]">
              {["Amount", "Card Type", "City", "Date", "Exp Type", "Gender"].map((t) => (
                <div key={t} className="h-[45px] flex items-center pl-[72px] relative">
                  <Check on={t === "Amount"} />
                  <div className="w-[50px] flex items-center justify-center shrink-0">
                    {t === "Amount" && <svg width="18" height="28" viewBox="0 0 18 28" fill="none" stroke="#333" strokeWidth="1.5"><path d="M17 5V1H1l8 13-8 13h16v-4" /></svg>}
                    {t === "Date" && <svg width="30" height="28" viewBox="0 0 30 28" fill="none" stroke="#333" strokeWidth="1.5"><rect x="1" y="3" width="28" height="24" /><path d="M1 9H29M7 0v5M23 0v5M6 14h18M6 18h18M6 22h18" /></svg>}
                  </div>
                  <span>{t}</span>
                  {t === "Date" && <svg className="absolute left-[48px]" width="12" height="24" viewBox="0 0 12 24" fill="none" stroke="#444" strokeWidth="1.5"><path d="M1 1l10 11L1 23" /></svg>}
                </div>
              ))}
            </div>
          </div>
        </div>
      </div>
      {/* Logo */}
      <div className="mt-[186px] ml-[8px] text-[65px] leading-[47px] font-black font-['Lato',sans-serif] tracking-[6px] text-[#0b1729] shrink-0">SCALER</div>
      <div className="mt-[36px] ml-[-4px] text-[#ee1c74] font-['Liberation_Serif',serif] italic rotate-[-8deg] text-[102px] leading-[100px] first-letter:text-[170px] first-letter:leading-[100px] whitespace-nowrap shrink-0">Topics</div>
      {/* Annotation rectangle */}
      <div className="absolute left-[394px] top-[1097px] w-[2015px] h-[542px] border-[5px] border-[#ff0000] pointer-events-none z-20" />
    </div>
  );
}
